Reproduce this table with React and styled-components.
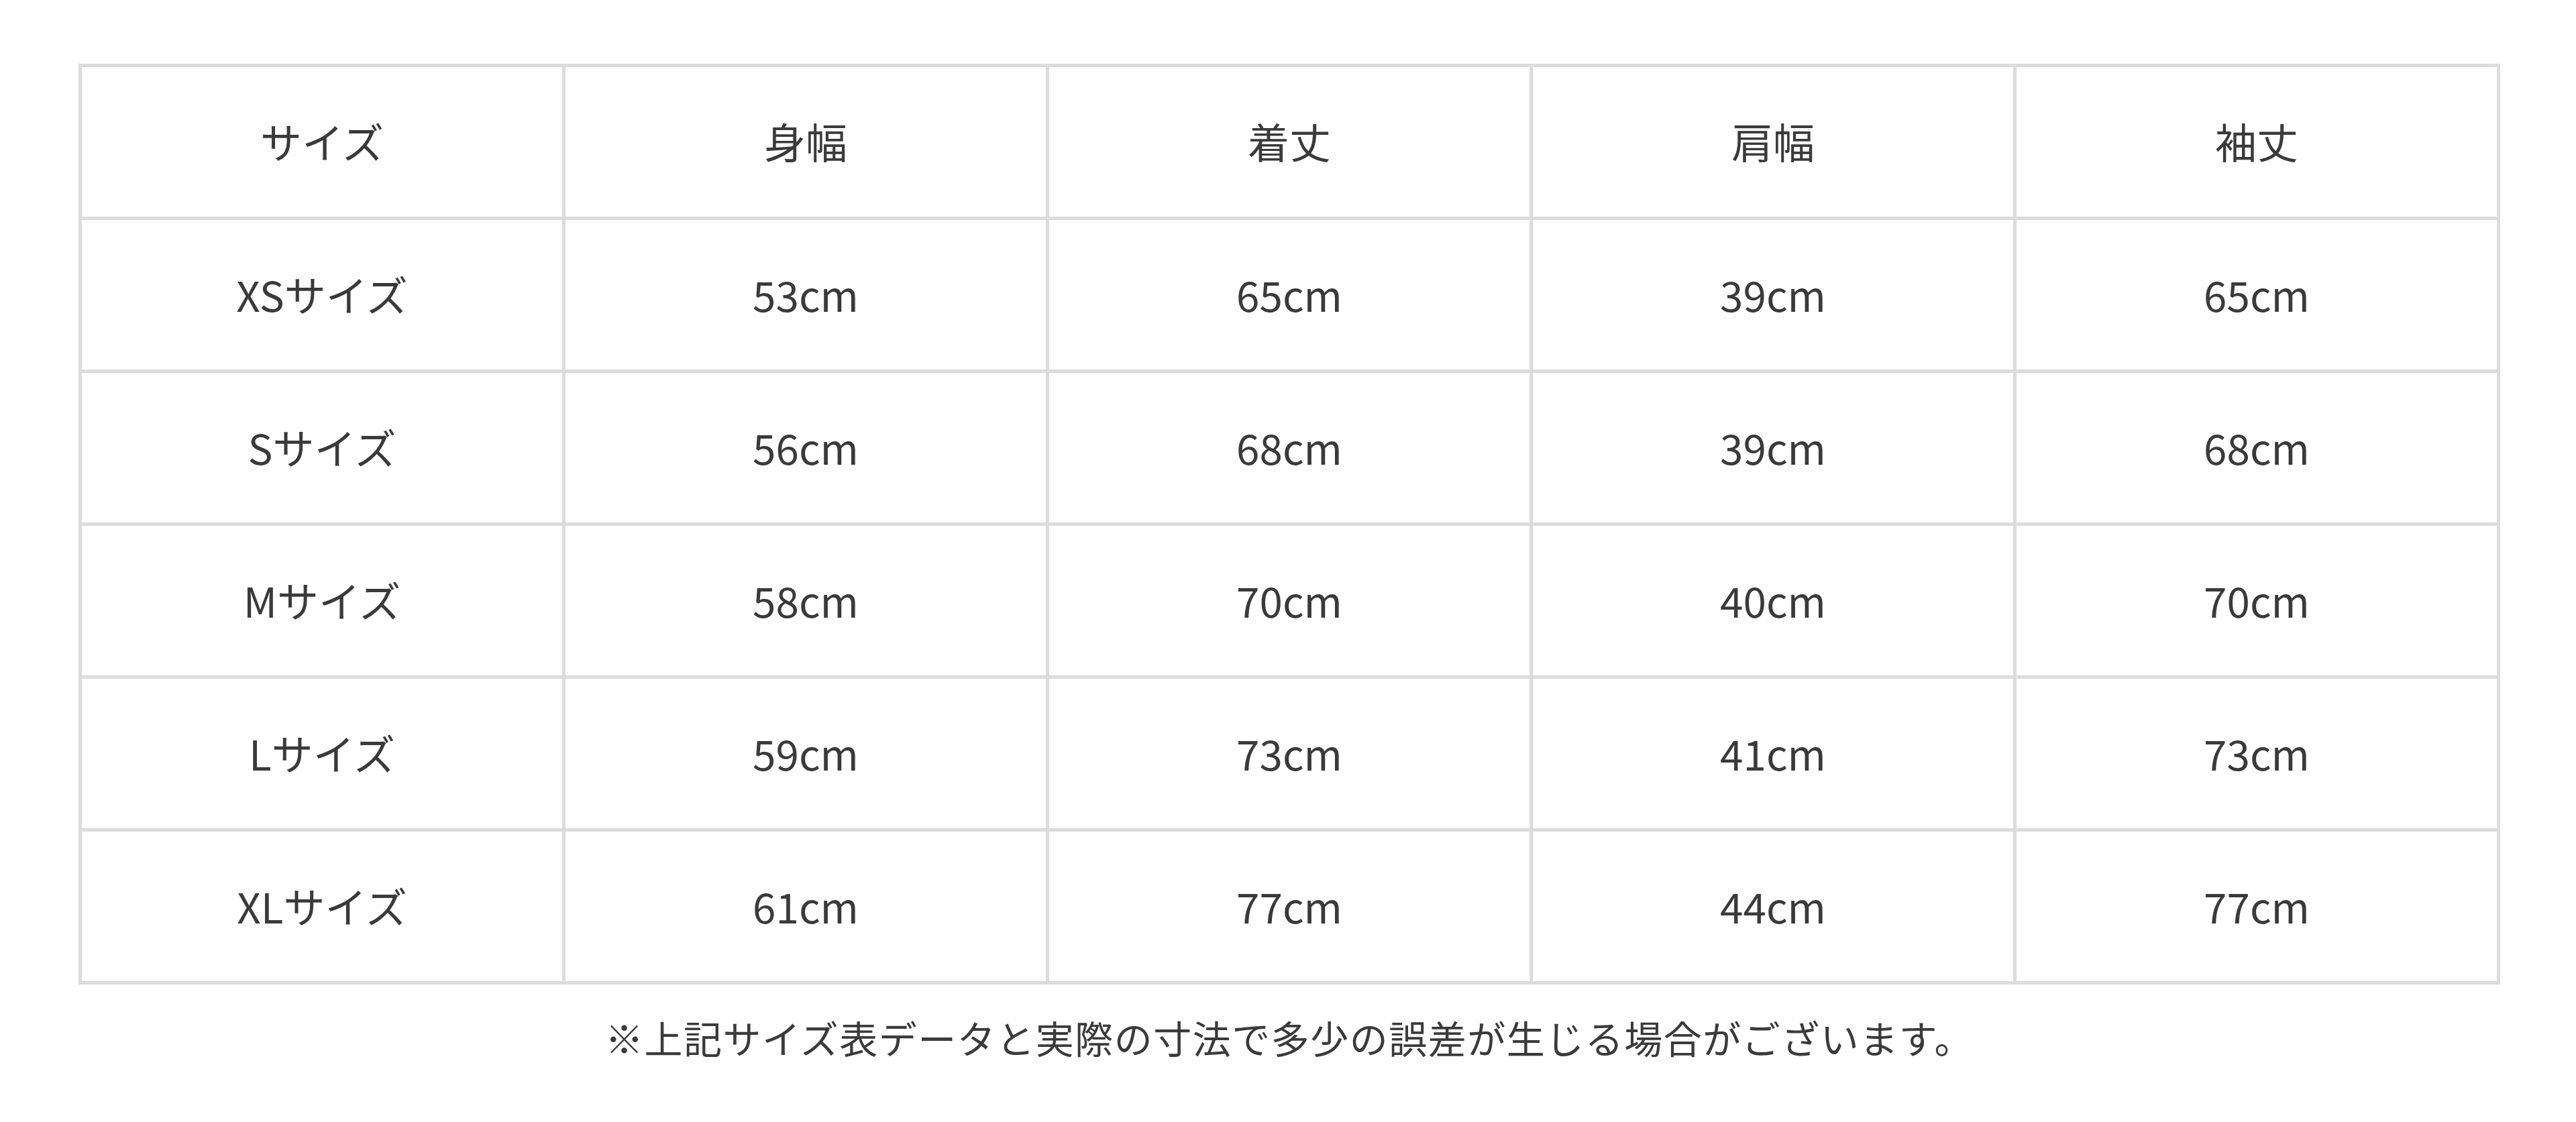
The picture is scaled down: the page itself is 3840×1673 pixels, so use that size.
import styled, {createGlobalStyle} from 'styled-components'

const GlobalStyle = createGlobalStyle`
  html, body {
    margin: 0;
    padding: 0;
    background: #fefefe;
  }
  body {
    font-family: "Noto Sans CJK JP", "Noto Sans", sans-serif;
    color: #3a3a3a;
  }
`

const Page = styled.div`
  padding: 95px 0 0 117px;
  width: 3610px;
`

const SizeTable = styled.table`
  width: 3610px;
  table-layout: fixed;
  border-collapse: separate;
  border-spacing: 0;
  border-top: 5px solid #dcdcdc;
  border-left: 5px solid #dcdcdc;
`

const Row = styled.tr`
  height: 228px;
`

const Cell = styled.td`
  border-right: 5px solid #dcdcdc;
  border-bottom: 5px solid #dcdcdc;
  padding: 0 0 4px;
  text-align: center;
  vertical-align: middle;
  font-size: 62px;
  font-weight: 400;
  line-height: 1;
  color: #3a3a3a;
`

const Note = styled.p`
  margin: 44px 0 0;
  text-align: center;
  font-size: 57px;
  letter-spacing: 1.5px;
  line-height: 68px;
  color: #3a3a3a;
`

const HEAD = ['サイズ', '身幅', '着丈', '肩幅', '袖丈']

const ROWS = [
  ['XSサイズ', '53cm', '65cm', '39cm', '65cm'],
  ['Sサイズ', '56cm', '68cm', '39cm', '68cm'],
  ['Mサイズ', '58cm', '70cm', '40cm', '70cm'],
  ['Lサイズ', '59cm', '73cm', '41cm', '73cm'],
  ['XLサイズ', '61cm', '77cm', '44cm', '77cm'],
]

export default function App() {
  return (
    <Page>
      <GlobalStyle />
      <SizeTable>
        <tbody>
          <Row>
            {HEAD.map(label => (
              <Cell key={label}>{label}</Cell>
            ))}
          </Row>
          {ROWS.map(row => (
            <Row key={row[0]}>
              {row.map((value, i) => (
                <Cell key={i}>{value}</Cell>
              ))}
            </Row>
          ))}
        </tbody>
      </SizeTable>
      <Note>※上記サイズ表データと実際の寸法で多少の誤差が生じる場合がございます。</Note>
    </Page>
  )
}
